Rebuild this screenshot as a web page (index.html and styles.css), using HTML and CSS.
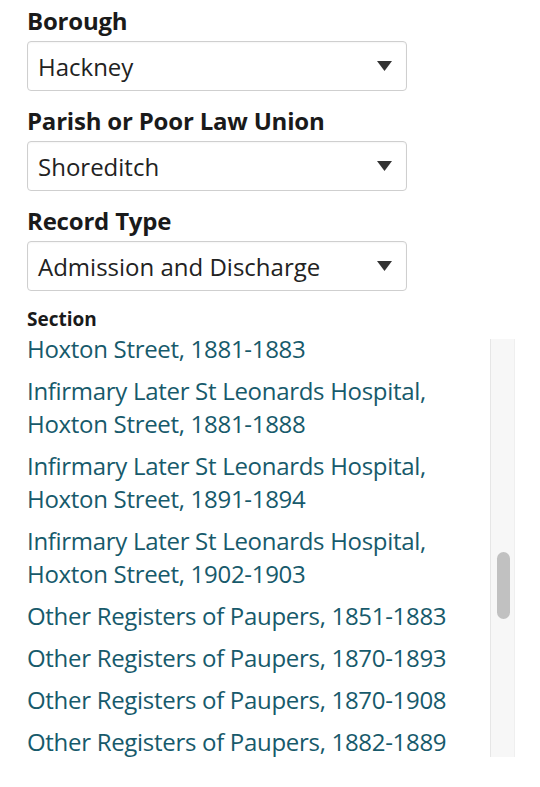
FILE: index.html
```html
<!DOCTYPE html>
<html lang="en">
<head>
<meta charset="utf-8">
<title>Records search</title>
<link rel="stylesheet" href="styles.css">
</head>
<body>
<main class="form">
  <div class="field">
    <div class="label">Borough</div>
    <div class="select"><span>Hackney</span><svg class="caret" width="15" height="10" viewBox="0 0 15 10"><path d="M0 0H15L7.5 10Z" fill="#333"/></svg></div>
  </div>
  <div class="field">
    <div class="label">Parish or Poor Law Union</div>
    <div class="select"><span>Shoreditch</span><svg class="caret" width="15" height="10" viewBox="0 0 15 10"><path d="M0 0H15L7.5 10Z" fill="#333"/></svg></div>
  </div>
  <div class="field">
    <div class="label">Record Type</div>
    <div class="select"><span>Admission and Discharge</span><svg class="caret" width="15" height="10" viewBox="0 0 15 10"><path d="M0 0H15L7.5 10Z" fill="#333"/></svg></div>
  </div>
  <div class="section-label">Section</div>
  <div class="section-box">
    <div class="list-viewport">
      <ul class="list">
        <li><a>Infirmary Later St Leonards Hospital, Hoxton Street, 1881-1883</a></li>
        <li><a>Infirmary Later St Leonards Hospital, Hoxton Street, 1881-1888</a></li>
        <li><a>Infirmary Later St Leonards Hospital, Hoxton Street, 1891-1894</a></li>
        <li><a>Infirmary Later St Leonards Hospital, Hoxton Street, 1902-1903</a></li>
        <li><a>Other Registers of Paupers, 1851-1883</a></li>
        <li><a>Other Registers of Paupers, 1870-1893</a></li>
        <li><a>Other Registers of Paupers, 1870-1908</a></li>
        <li><a>Other Registers of Paupers, 1882-1889</a></li>
      </ul>
    </div>
    <div class="track"><div class="thumb"></div></div>
  </div>
</main>
</body>
</html>
```

FILE: styles.css
```css
html, body {
  margin: 0;
  padding: 0;
  background: #ffffff;
}
body {
  font-family: "Open Sans", "Noto Sans", "Liberation Sans", sans-serif;
  color: #1b1b1b;
}
.form {
  padding: 6px 0 0 27px;
  display: flex;
  flex-direction: column;
}
.field {
  display: flex;
  flex-direction: column;
  margin-bottom: 15px;
}
.label {
  font-size: 24px;
  font-weight: 700;
  line-height: 30px;
  margin-bottom: 5px;
  color: #1a1a1a;
  letter-spacing: -0.2px;
}
.select {
  box-sizing: border-box;
  width: 380px;
  height: 50px;
  border: 1px solid #cfcfcf;
  border-radius: 4px;
  padding: 0 14px 0 10px;
  display: flex;
  align-items: center;
  justify-content: space-between;
  font-size: 24px;
  color: #222;
  box-shadow: inset 0 1px 2px rgba(0,0,0,0.04);
}
.caret {
  display: block;
  flex: none;
}
.section-label {
  font-size: 19px;
  font-weight: 700;
  line-height: 24px;
  margin-top: 1px;
  margin-bottom: 8px;
  color: #1a1a1a;
}
.section-box {
  display: flex;
  width: 488px;
  height: 418px;
}
.list-viewport {
  flex: 1;
  overflow: hidden;
}
.list {
  list-style: none;
  margin: -40px 0 0 0;
  padding: 0;
  display: flex;
  flex-direction: column;
  gap: 9px;
}
.list li {
  font-size: 24px;
  line-height: 33px;
  color: #175a6b;
  letter-spacing: -0.3px;
}
.list a {
  color: inherit;
  text-decoration: none;
}
.track {
  box-sizing: border-box;
  width: 25px;
  background: #f7f7f7;
  border-left: 1px solid #e6e6e6;
  border-right: 1px solid #efefef;
  padding: 213px 0 0 6px;
}
.thumb {
  width: 13px;
  height: 67px;
  border-radius: 7px;
  background: #c1c1c1;
}
```
